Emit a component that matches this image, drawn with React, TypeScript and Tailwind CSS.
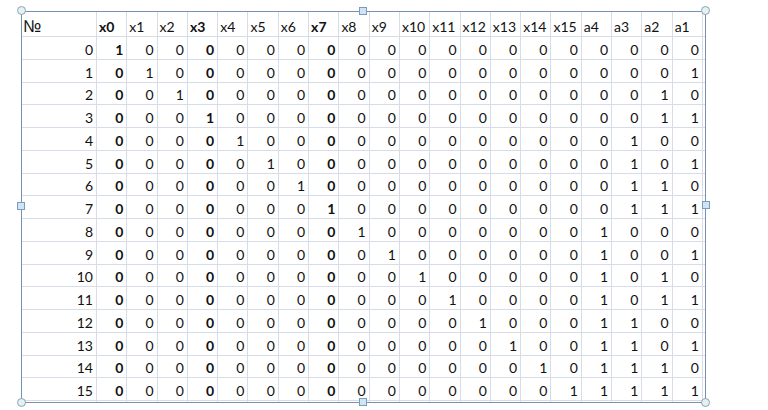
import React from "react";

const headers = [
  "x0","x1","x2","x3","x4","x5","x6","x7","x8","x9","x10","x11","x12","x13","x14","x15","a4","a3","a2","a1",
];
const boldCols = new Set([0, 3, 7]);

function valueOf(row: number, col: number): number {
  if (col < 16) return row === col ? 1 : 0;
  const bit = 3 - (col - 16);
  return (row >> bit) & 1;
}

const cellBase = "border-r border-b border-[#d6dde9] flex items-end pb-[1px] leading-[17px] overflow-hidden whitespace-nowrap";

function Circle({ cls }: { cls: string }) {
  return (
    <div className={`absolute w-[9px] h-[9px] rounded-full bg-[#e2f1f2] border border-[#8ea2b2] ${cls}`} />
  );
}
function Square({ cls }: { cls: string }) {
  return <div className={`absolute w-[8px] h-[8px] bg-[#cfe5f6] border border-[#7d9bba] ${cls}`} />;
}

export default function App() {
  const rows = Array.from({ length: 16 }, (_, i) => i);
  return (
    <div className="w-[768px] h-[410px] bg-white overflow-hidden pt-[11px] pl-[21px] font-['Lato','Noto_Sans',sans-serif] text-[14px] text-[#111]">
      <div className="relative w-[685px] h-[392px] border border-[#7b90b0]">
        <div className="grid w-full h-full overflow-hidden grid-cols-[75px_repeat(20,30.3px)_1fr] grid-rows-[25px_repeat(16,22.75px)_1fr]">
          {/* header row */}
          <div className={`${cellBase} justify-start pl-[1px]`}>
            <span className="font-['Liberation_Sans',sans-serif] text-[17px] leading-[17px]">№</span>
          </div>
          {headers.map((h, c) => (
            <div
              key={h}
              className={`${cellBase} justify-start pl-[2px] ${boldCols.has(c) ? "font-bold" : ""}`}
            >
              {h}
            </div>
          ))}
          <div className="border-b border-[#d6dde9]" />
          {/* data rows */}
          {rows.map((r) => (
            <React.Fragment key={r}>
              <div className={`${cellBase} justify-end pr-[3px]`}>{r}</div>
              {headers.map((h, c) => (
                <div
                  key={h}
                  className={`${cellBase} justify-end pr-[3px] ${boldCols.has(c) ? "font-bold" : ""}`}
                >
                  {valueOf(r, c)}
                </div>
              ))}
              <div className="border-b border-[#d6dde9]" />
            </React.Fragment>
          ))}
          {/* filler row */}
          <div className="border-r border-[#d6dde9]" />
          {headers.map((h) => (
            <div key={h} className="border-r border-[#d6dde9]" />
          ))}
          <div />
        </div>
        <Circle cls="left-[-5px] top-[-6px]" />
        <Circle cls="right-[-5px] top-[-6px]" />
        <Circle cls="left-[-5px] bottom-[-5px]" />
        <Circle cls="right-[-5px] bottom-[-5px]" />
        <Square cls="left-[337px] top-[-5px]" />
        <Square cls="left-[337px] bottom-[-4px]" />
        <Square cls="left-[-5px] top-[190px]" />
        <Square cls="right-[-5px] top-[189px]" />
      </div>
    </div>
  );
}
